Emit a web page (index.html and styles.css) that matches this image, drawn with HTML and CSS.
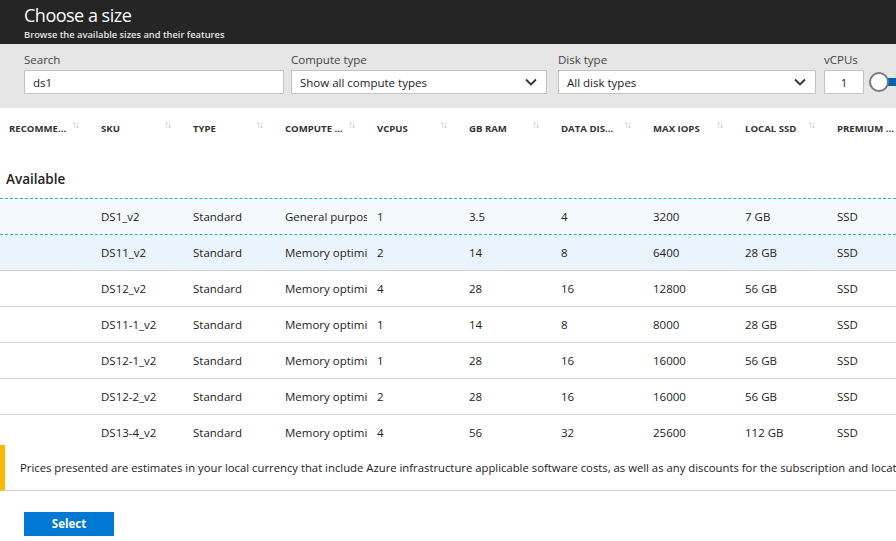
FILE: index.html
```
<!DOCTYPE html>
<html>
<head>
<meta charset="utf-8">
<link rel="stylesheet" href="styles.css">
</head>
<body>
<header class="blade-header">
  <h1 class="title">Choose a size</h1>
  <div class="subtitle">Browse the available sizes and their features</div>
</header>
<section class="filters">
  <div class="filter f-search">
    <label class="flabel">Search</label>
    <div class="field"><span class="fval">ds1</span></div>
  </div>
  <div class="filter f-compute">
    <label class="flabel">Compute type</label>
    <div class="field select"><span class="fval">Show all compute types</span>
      <svg class="chev" viewBox="0 0 12 8" width="12" height="8"><path d="M1 1.5 L6 6.5 L11 1.5" fill="none" stroke="#333" stroke-width="1.8"/></svg>
    </div>
  </div>
  <div class="filter f-disk">
    <label class="flabel">Disk type</label>
    <div class="field select"><span class="fval">All disk types</span>
      <svg class="chev" viewBox="0 0 12 8" width="12" height="8"><path d="M1 1.5 L6 6.5 L11 1.5" fill="none" stroke="#333" stroke-width="1.8"/></svg>
    </div>
  </div>
  <div class="filter f-vcpu">
    <label class="flabel">vCPUs</label>
    <div class="vrow">
      <div class="field num"><span class="fval">1</span></div>
      <div class="slider"><span class="knob"></span><span class="track"></span></div>
    </div>
  </div>
</section>
<section class="grid-wrap">
  <div class="row head">
    <div class="hc"><span class="hl">RECOMME...</span><span class="sort">↑↓</span></div>
    <div class="hc"><span class="hl">SKU</span><span class="sort">↑↓</span></div>
    <div class="hc"><span class="hl">TYPE</span><span class="sort">↑↓</span></div>
    <div class="hc"><span class="hl">COMPUTE ...</span><span class="sort">↑↓</span></div>
    <div class="hc"><span class="hl">VCPUS</span><span class="sort">↑↓</span></div>
    <div class="hc"><span class="hl">GB RAM</span><span class="sort">↑↓</span></div>
    <div class="hc"><span class="hl">DATA DIS...</span><span class="sort">↑↓</span></div>
    <div class="hc"><span class="hl">MAX IOPS</span><span class="sort">↑↓</span></div>
    <div class="hc"><span class="hl">LOCAL SSD</span><span class="sort">↑↓</span></div>
    <div class="hc"><span class="hl">PREMIUM ...</span><span class="sort">↑↓</span></div>
  </div>
  <div class="group">Available</div>
  <div class="row data hover">
    <div class="c"></div><div class="c">DS1_v2</div><div class="c">Standard</div><div class="c">General purpose</div><div class="c">1</div><div class="c">3.5</div><div class="c">4</div><div class="c">3200</div><div class="c">7 GB</div><div class="c">SSD</div>
  </div>
  <div class="row data selected">
    <div class="c"></div><div class="c">DS11_v2</div><div class="c">Standard</div><div class="c">Memory optimized</div><div class="c">2</div><div class="c">14</div><div class="c">8</div><div class="c">6400</div><div class="c">28 GB</div><div class="c">SSD</div>
  </div>
  <div class="row data">
    <div class="c"></div><div class="c">DS12_v2</div><div class="c">Standard</div><div class="c">Memory optimized</div><div class="c">4</div><div class="c">28</div><div class="c">16</div><div class="c">12800</div><div class="c">56 GB</div><div class="c">SSD</div>
  </div>
  <div class="row data">
    <div class="c"></div><div class="c">DS11-1_v2</div><div class="c">Standard</div><div class="c">Memory optimized</div><div class="c">1</div><div class="c">14</div><div class="c">8</div><div class="c">8000</div><div class="c">28 GB</div><div class="c">SSD</div>
  </div>
  <div class="row data">
    <div class="c"></div><div class="c">DS12-1_v2</div><div class="c">Standard</div><div class="c">Memory optimized</div><div class="c">1</div><div class="c">28</div><div class="c">16</div><div class="c">16000</div><div class="c">56 GB</div><div class="c">SSD</div>
  </div>
  <div class="row data">
    <div class="c"></div><div class="c">DS12-2_v2</div><div class="c">Standard</div><div class="c">Memory optimized</div><div class="c">2</div><div class="c">28</div><div class="c">16</div><div class="c">16000</div><div class="c">56 GB</div><div class="c">SSD</div>
  </div>
  <div class="row data">
    <div class="c"></div><div class="c">DS13-4_v2</div><div class="c">Standard</div><div class="c">Memory optimized</div><div class="c">4</div><div class="c">56</div><div class="c">32</div><div class="c">25600</div><div class="c">112 GB</div><div class="c">SSD</div>
  </div>
</section>
<div class="notice">Prices presented are estimates in your local currency that include Azure infrastructure applicable software costs, as well as any discounts for the subscription and location.</div>
<footer class="actions">
  <button class="btn-primary">Select</button>
</footer>
</body>
</html>
```
FILE: styles.css
```
* { box-sizing: border-box; }
html, body { margin: 0; padding: 0; }
body {
  width: 896px;
  height: 541px;
  overflow: hidden;
  background: #fff;
  font-family: "Open Sans", "Noto Sans", sans-serif;
  color: #333;
}
.blade-header {
  background: #252525;
  height: 44px;
  padding: 3px 0 0 24px;
  color: #fff;
}
.title {
  margin: 0;
  font-size: 18px;
  font-weight: 400;
  line-height: 24px;
  letter-spacing: -0.5px;
}
.subtitle {
  font-size: 9.3px;
  font-weight: 600;
  line-height: 12px;
  margin-top: 2px;
  color: #e6e6e6;
}
.filters {
  background: #e6e6e6;
  height: 64px;
  padding: 7px 0 0 24px;
  display: flex;
  overflow: hidden;
}
.filter { display: flex; flex-direction: column; flex-shrink: 0; }
.flabel {
  font-size: 11.5px;
  line-height: 17px;
  color: #454545;
  margin-bottom: 2px;
}
.f-search { width: 267px; }
.f-search .field { width: 260px; }
.f-compute { width: 267px; }
.f-compute .field { width: 256px; }
.f-disk { width: 266px; }
.f-disk .field { width: 258px; }
.field {
  height: 24px;
  background: #fff;
  border: 1px solid #c4c4c4;
  display: flex;
  align-items: center;
  padding: 0 8px;
  font-size: 11.5px;
  color: #222;
}
.select { justify-content: space-between; }
.chev { margin-right: 1px; }
.vrow { display: flex; align-items: center; }
.num { width: 40px; justify-content: center; padding: 0; }
.slider { display: flex; align-items: center; margin-left: 5px; }
.knob {
  width: 20px; height: 20px;
  border-radius: 50%;
  border: 2px solid #7a7a7a;
  background: #fff;
  position: relative;
  z-index: 1;
}
.track {
  width: 20px; height: 8px;
  background: #0063b1;
  margin-left: -2px;
}
.grid-wrap {
  height: 337px;
  overflow: hidden;
}
.row {
  display: grid;
  grid-template-columns: repeat(10, 92px);
  padding-left: 9px;
}
.head { height: 40px; align-items: center; }
.hc { display: flex; align-items: center; white-space: nowrap; }
.hl {
  min-width: 63px;
  padding-right: 1px;
  font-size: 9.6px;
  font-weight: 700;
  color: #333;
}
.sort {
  font-size: 10px;
  line-height: 10px;
  color: #b3b3b3;
  letter-spacing: -2px;
  position: relative;
  top: -4px;
}
.group {
  font-size: 13.5px;
  font-weight: 600;
  color: #222;
  padding: 22px 0 0 6px;
  height: 50px;
  line-height: 18px;
}
.data {
  height: 36px;
  align-items: center;
  border-bottom: 1px solid #d6d6d6;
  font-size: 11.5px;
  color: #222;
}
.data .c {
  white-space: nowrap;
  overflow: hidden;
  margin-right: 10px;
}
.hover {
  height: 37px;
  background: #f4f9fd;
  border-top: 1px dashed #1fb3e0;
  border-bottom: 1px dashed #1fb3e0;
}
.selected { background: #eaf4fc; border-bottom: 1px solid #cfcfcf; }
.notice {
  height: 46px;
  border-left: 5px solid #ffb900;
  border-bottom: 1px solid #cfcfcf;
  padding: 0 0 0 15px;
  display: flex;
  align-items: center;
  white-space: nowrap;
  overflow: hidden;
  font-size: 11.3px;
  color: #222;
}
.actions { padding: 20px 0 0 24px; }
.btn-primary {
  width: 90px;
  height: 24px;
  border: none;
  background: #0078d4;
  color: #fff;
  font-family: "Open Sans", "Noto Sans", sans-serif;
  font-size: 11.5px;
  font-weight: 700;
  padding: 0;
}
```
